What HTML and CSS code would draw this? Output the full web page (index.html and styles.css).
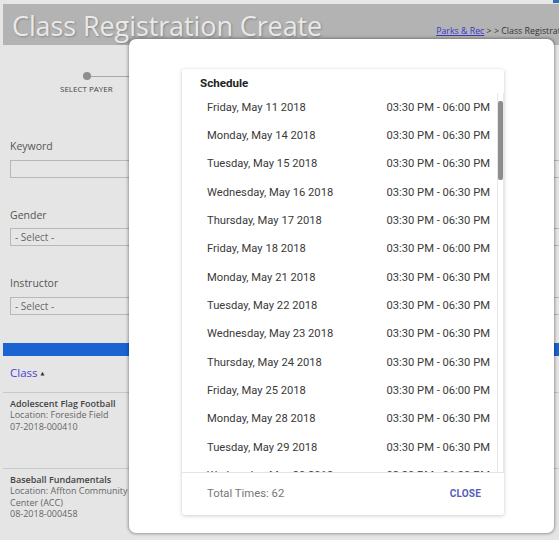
FILE: index.html
```html
<!DOCTYPE html>
<html>
<head>
<meta charset="utf-8">
<link rel="stylesheet" href="styles.css">
</head>
<body>
<div class="topstrip"><span class="topblue"></span></div>
<div class="page">
  <header class="header">
    <h1 class="title">Class Registration Create</h1>
    <div class="crumbs"><a href="#" class="crumb-link">Parks &amp; Rec</a> &gt; &gt; Class Registration</div>
  </header>
  <div class="steps">
    <div class="step">
      <div class="step-track"><span class="step-dot"></span><span class="step-line"></span></div>
      <div class="step-label">SELECT PAYER</div>
    </div>
  </div>
  <div class="form">
    <div class="field">
      <label class="label">Keyword</label>
      <div class="input"></div>
    </div>
    <div class="field">
      <label class="label">Gender</label>
      <div class="input">- Select -</div>
    </div>
    <div class="field">
      <label class="label">Instructor</label>
      <div class="input">- Select -</div>
    </div>
  </div>
  <div class="bluebar"></div>
  <div class="table">
    <div class="thead"><a href="#" class="sort-link">Class</a><span class="sort-arrow">&#9650;</span></div>
    <div class="trow">
      <div class="cls-name">Adolescent Flag Football</div>
      <div class="cls-line">Location: Foreside Field</div>
      <div class="cls-line">07-2018-000410</div>
    </div>
    <div class="trow">
      <div class="cls-name">Baseball Fundamentals</div>
      <div class="cls-line">Location: Affton Community<br>Center (ACC)</div>
      <div class="cls-line">08-2018-000458</div>
    </div>
  </div>
</div>

<div class="modal">
  <div class="card">
    <div class="card-title">Schedule</div>
    <div class="list-wrap">
      <div class="list">
        <div class="row"><span>Friday, May 11 2018</span><span>03:30 PM - 06:00 PM</span></div>
        <div class="row"><span>Monday, May 14 2018</span><span>03:30 PM - 06:30 PM</span></div>
        <div class="row"><span>Tuesday, May 15 2018</span><span>03:30 PM - 06:30 PM</span></div>
        <div class="row"><span>Wednesday, May 16 2018</span><span>03:30 PM - 06:30 PM</span></div>
        <div class="row"><span>Thursday, May 17 2018</span><span>03:30 PM - 06:30 PM</span></div>
        <div class="row"><span>Friday, May 18 2018</span><span>03:30 PM - 06:00 PM</span></div>
        <div class="row"><span>Monday, May 21 2018</span><span>03:30 PM - 06:30 PM</span></div>
        <div class="row"><span>Tuesday, May 22 2018</span><span>03:30 PM - 06:30 PM</span></div>
        <div class="row"><span>Wednesday, May 23 2018</span><span>03:30 PM - 06:30 PM</span></div>
        <div class="row"><span>Thursday, May 24 2018</span><span>03:30 PM - 06:30 PM</span></div>
        <div class="row"><span>Friday, May 25 2018</span><span>03:30 PM - 06:00 PM</span></div>
        <div class="row"><span>Monday, May 28 2018</span><span>03:30 PM - 06:30 PM</span></div>
        <div class="row"><span>Tuesday, May 29 2018</span><span>03:30 PM - 06:30 PM</span></div>
        <div class="row"><span>Wednesday, May 30 2018</span><span>03:30 PM - 06:30 PM</span></div>
        <div class="row"><span>Thursday, May 31 2018</span><span>03:30 PM - 06:30 PM</span></div>
      </div>
      <div class="scroll-track"><div class="scroll-thumb"></div></div>
    </div>
    <div class="card-foot">
      <span class="total">Total Times: 62</span>
      <span class="close">CLOSE</span>
    </div>
  </div>
</div>
</body>
</html>
```

FILE: styles.css
```css
* { box-sizing: border-box; }
html, body { margin: 0; padding: 0; }
body {
  width: 559px;
  height: 540px;
  overflow: hidden;
  background: #e5e5e5;
  font-family: "Open Sans", "DejaVu Sans", sans-serif;
  color: #555;
}
.topstrip {
  height: 4px;
  background: #e6e6e6;
  position: relative;
}
.topblue {
  position: absolute;
  right: 0;
  top: 0;
  width: 6px;
  height: 3px;
  background: #2a6fb5;
}
.page {
  padding-left: 3px;
}
.header {
  height: 41px;
  background: #b3b3b3;
  display: flex;
  align-items: flex-end;
  padding-left: 9px;
  overflow: hidden;
}
.title {
  margin: 0;
  font-family: "Open Sans", sans-serif;
  font-weight: 400;
  font-size: 27px;
  line-height: 38px;
  color: #e9e9e9;
  text-shadow: 1px 1px 2px rgba(0,0,0,0.25);
  letter-spacing: -0.1px;
  white-space: nowrap;
  flex: none;
}
.crumbs {
  font-size: 8.8px;
  color: #333;
  white-space: nowrap;
  padding-bottom: 8px;
  margin-left: 114px;
  flex: none;
}
.crumb-link {
  color: #3a3ac8;
  text-decoration: underline;
}
.steps {
  height: 57px;
  padding-top: 26px;
  padding-left: 55px;
}
.step { width: 64px; }
.step-track {
  display: flex;
  align-items: center;
  height: 8px;
  padding-left: 25px;
  margin-top: 1px;
}
.step-dot {
  width: 8px;
  height: 8px;
  border-radius: 50%;
  background: #8e8e8e;
  flex: none;
}
.step-line {
  display: block;
  width: 60px;
  height: 1px;
  background: #a8a8a8;
  flex: none;
}
.step-label {
  font-size: 8px;
  color: #444;
  margin-top: 3px;
  white-space: nowrap;
  padding-left: 2px;
}
.form {
  padding-left: 7px;
  padding-top: 37px;
}
.field {
  height: 68.5px;
}
.label {
  display: block;
  font-size: 10.5px;
  color: #555;
  line-height: 15px;
  height: 20.5px;
}
.input {
  height: 18px;
  border: 1px solid #b8b8b8;
  background: #e6e6e6;
  font-size: 10px;
  color: #666;
  padding-left: 4px;
  line-height: 16px;
  margin-right: -10px;
}
.bluebar {
  margin-top: -2px;
  height: 13px;
  background: #1a63d1;
}
.thead {
  height: 37px;
  border-bottom: 1px solid #c8c8c8;
  padding-left: 7px;
  padding-top: 9px;
  font-size: 11.5px;
}
.sort-link {
  color: #4a3fd8;
  text-decoration: none;
}
.sort-arrow {
  font-size: 5px;
  color: #333;
  margin-left: 3px;
  vertical-align: 2px;
}
.trow {
  height: 76px;
  border-bottom: 1px solid #c8c8c8;
  padding-left: 7px;
  padding-top: 5px;
  font-size: 9px;
  line-height: 11.5px;
}
.cls-name {
  font-weight: 600;
  color: #444;
}
.cls-line { color: #666; }

/* modal overlay */
.modal {
  position: absolute;
  left: 129px;
  top: 39px;
  width: 425px;
  height: 494px;
  background: #fff;
  border-radius: 7px;
  box-shadow: 0 0 3px 1px rgba(0,0,0,0.35);
  padding: 30px 50px 0 53px;
}
.card {
  width: 322px;
  height: 446px;
  background: #fff;
  box-shadow: 0 1px 4px rgba(0,0,0,0.18), 0 0 1px rgba(0,0,0,0.12);
  border-radius: 2px;
  display: flex;
  flex-direction: column;
  font-family: Roboto, "Noto Sans", sans-serif;
}
.card-title {
  height: 24px;
  padding-left: 18px;
  padding-top: 7px;
  font-size: 11.6px;
  font-weight: 700;
  color: #222;
  line-height: 14px;
}
.list-wrap {
  height: 379px;
  display: flex;
  overflow: hidden;
}
.list {
  flex: 1;
  padding-left: 25px;
  padding-right: 7px;
}
.row {
  height: 28.33px;
  display: flex;
  justify-content: space-between;
  align-items: center;
  font-size: 11.2px;
  color: #3a3a3a;
  white-space: nowrap;
}
.scroll-track {
  width: 7px;
  flex: none;
  border-left: 1px solid #e8e8e8;
  border-right: 1px solid #e8e8e8;
  padding-top: 8px;
}
.scroll-thumb {
  width: 5px;
  height: 79px;
  background: #8d8d8d;
  border-radius: 2px;
}
.card-foot {
  flex: 1;
  border-top: 1px solid #e4e4e4;
  display: flex;
  align-items: center;
  justify-content: space-between;
  padding: 0 23px 2px 25px;
}
.total {
  font-size: 11.3px;
  color: #777;
}
.close {
  font-size: 10px;
  font-weight: 700;
  color: #5560b8;
  letter-spacing: 0.2px;
}
```
